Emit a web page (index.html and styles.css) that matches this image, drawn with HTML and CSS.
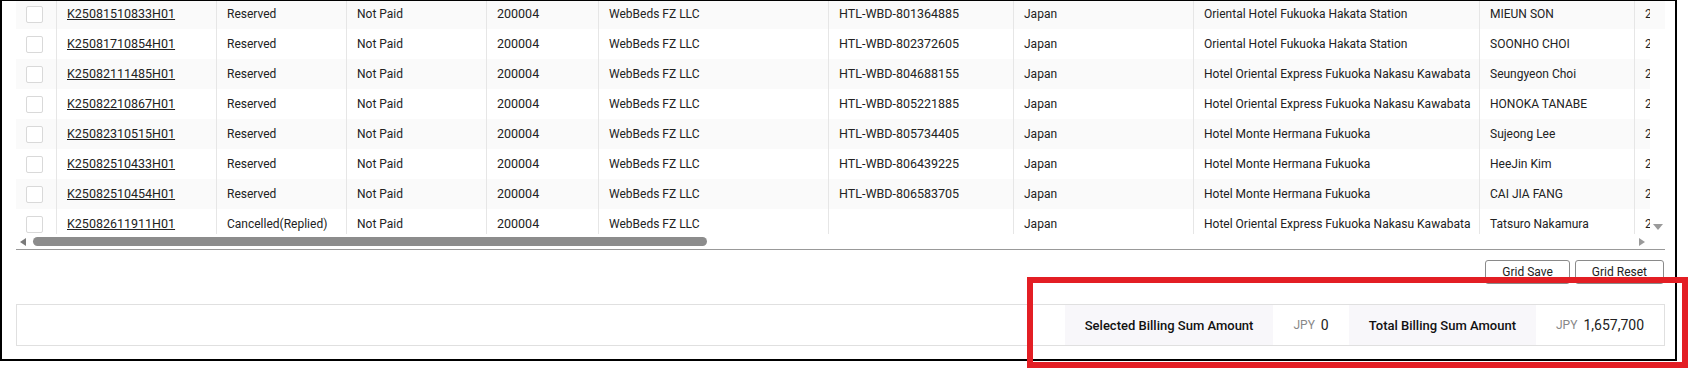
FILE: index.html
```html
<!DOCTYPE html>
<html lang="en">
<head>
  <meta charset="UTF-8">
  <title>Billing List</title>
  <link rel="stylesheet" href="styles.css">
</head>
<body>

  <div class="frame">
    <div class="grid">
      <div class="grid-body">
        <div class="viewport">
          <div class="rows">
            <div class="row">
              <div class="cell chk"><span class="box"></span></div>
              <div class="cell"><a href="#">K25081510833H01</a></div>
              <div class="cell">Reserved</div>
              <div class="cell">Not Paid</div>
              <div class="cell num">200004</div>
              <div class="cell">WebBeds FZ LLC</div>
              <div class="cell num">HTL-WBD-801364885</div>
              <div class="cell">Japan</div>
              <div class="cell">Oriental Hotel Fukuoka Hakata Station</div>
              <div class="cell">MIEUN SON</div>
              <div class="cell">2025-08-15</div>
            </div>
            <div class="row">
              <div class="cell chk"><span class="box"></span></div>
              <div class="cell"><a href="#">K25081710854H01</a></div>
              <div class="cell">Reserved</div>
              <div class="cell">Not Paid</div>
              <div class="cell num">200004</div>
              <div class="cell">WebBeds FZ LLC</div>
              <div class="cell num">HTL-WBD-802372605</div>
              <div class="cell">Japan</div>
              <div class="cell">Oriental Hotel Fukuoka Hakata Station</div>
              <div class="cell">SOONHO CHOI</div>
              <div class="cell">2025-08-17</div>
            </div>
            <div class="row">
              <div class="cell chk"><span class="box"></span></div>
              <div class="cell"><a href="#">K25082111485H01</a></div>
              <div class="cell">Reserved</div>
              <div class="cell">Not Paid</div>
              <div class="cell num">200004</div>
              <div class="cell">WebBeds FZ LLC</div>
              <div class="cell num">HTL-WBD-804688155</div>
              <div class="cell">Japan</div>
              <div class="cell">Hotel Oriental Express Fukuoka Nakasu Kawabata</div>
              <div class="cell">Seungyeon Choi</div>
              <div class="cell">2025-08-21</div>
            </div>
            <div class="row">
              <div class="cell chk"><span class="box"></span></div>
              <div class="cell"><a href="#">K25082210867H01</a></div>
              <div class="cell">Reserved</div>
              <div class="cell">Not Paid</div>
              <div class="cell num">200004</div>
              <div class="cell">WebBeds FZ LLC</div>
              <div class="cell num">HTL-WBD-805221885</div>
              <div class="cell">Japan</div>
              <div class="cell">Hotel Oriental Express Fukuoka Nakasu Kawabata</div>
              <div class="cell">HONOKA TANABE</div>
              <div class="cell">2025-08-22</div>
            </div>
            <div class="row">
              <div class="cell chk"><span class="box"></span></div>
              <div class="cell"><a href="#">K25082310515H01</a></div>
              <div class="cell">Reserved</div>
              <div class="cell">Not Paid</div>
              <div class="cell num">200004</div>
              <div class="cell">WebBeds FZ LLC</div>
              <div class="cell num">HTL-WBD-805734405</div>
              <div class="cell">Japan</div>
              <div class="cell">Hotel Monte Hermana Fukuoka</div>
              <div class="cell">Sujeong Lee</div>
              <div class="cell">2025-08-23</div>
            </div>
            <div class="row">
              <div class="cell chk"><span class="box"></span></div>
              <div class="cell"><a href="#">K25082510433H01</a></div>
              <div class="cell">Reserved</div>
              <div class="cell">Not Paid</div>
              <div class="cell num">200004</div>
              <div class="cell">WebBeds FZ LLC</div>
              <div class="cell num">HTL-WBD-806439225</div>
              <div class="cell">Japan</div>
              <div class="cell">Hotel Monte Hermana Fukuoka</div>
              <div class="cell">HeeJin Kim</div>
              <div class="cell">2025-08-25</div>
            </div>
            <div class="row">
              <div class="cell chk"><span class="box"></span></div>
              <div class="cell"><a href="#">K25082510454H01</a></div>
              <div class="cell">Reserved</div>
              <div class="cell">Not Paid</div>
              <div class="cell num">200004</div>
              <div class="cell">WebBeds FZ LLC</div>
              <div class="cell num">HTL-WBD-806583705</div>
              <div class="cell">Japan</div>
              <div class="cell">Hotel Monte Hermana Fukuoka</div>
              <div class="cell">CAI JIA FANG</div>
              <div class="cell">2025-08-25</div>
            </div>
            <div class="row">
              <div class="cell chk"><span class="box"></span></div>
              <div class="cell"><a href="#">K25082611911H01</a></div>
              <div class="cell">Cancelled(Replied)</div>
              <div class="cell">Not Paid</div>
              <div class="cell num">200004</div>
              <div class="cell">WebBeds FZ LLC</div>
              <div class="cell num"></div>
              <div class="cell">Japan</div>
              <div class="cell">Hotel Oriental Express Fukuoka Nakasu Kawabata</div>
              <div class="cell">Tatsuro Nakamura</div>
              <div class="cell">2025-08-26</div>
            </div>
          </div>
        </div>
        <div class="vscroll">
          <span class="vthumb"></span>
          <span class="arrow-down"></span>
        </div>
      </div>
      <div class="hscroll">
        <span class="arrow-left"></span>
        <span class="hthumb"></span>
        <span class="arrow-right"></span>
        <span class="corner"></span>
      </div>
    </div>

    <div class="actions">
      <button>Grid Save</button>
      <button>Grid Reset</button>
    </div>

    <div class="summary">
      <div class="sum-label">Selected Billing Sum Amount</div>
      <div class="sum-value"><span class="cur">JPY</span>0</div>
      <div class="sum-label">Total Billing Sum Amount</div>
      <div class="sum-value"><span class="cur">JPY</span>1,657,700</div>
    </div>
  </div>

  <div class="highlight"></div>

</body>
</html>
```

FILE: styles.css
```css
body {
  margin: 0;
  font-family: Roboto, 'Noto Sans', sans-serif;
  font-size: 12px;
  color: #222;
  background: #fff;
}
.frame {
  width: 1677px;
  height: 361px;
  box-sizing: border-box;
  border: 2px solid #000;
  border-top-width: 1px;
  padding: 0 10px 0 14px;
}
.grid {
  border-bottom: 1px solid #999;
}
.grid-body {
  display: flex;
  height: 233px;
}
.viewport {
  flex: 1;
  overflow: hidden;
}
.rows {
  margin-top: -2px;
}
.row {
  display: grid;
  grid-template-columns: 41px 160px 130px 140px 112px 230px 185px 180px 286px 155px 120px;
  height: 30px;
  background: #fff;
}
.row:nth-child(odd) {
  background: #fafafa;
}
.cell {
  border-right: 1px solid #e6e6e6;
  padding-left: 10px;
  line-height: 30px;
  white-space: nowrap;
  overflow: hidden;
}
.cell a {
  font-size: 12.5px;
  color: #222;
  text-decoration: underline;
}
.num {
  font-size: 12.5px;
}
.chk {
  display: flex;
  align-items: center;
  padding-left: 10px;
}
.box {
  width: 15px;
  height: 15px;
  border: 1px solid #d9d9d9;
  border-radius: 2px;
  background: #fff;
}
.vscroll {
  width: 15px;
  display: flex;
  flex-direction: column;
  justify-content: space-between;
  align-items: center;
}
.vthumb {
  width: 15px;
  height: 28px;
  background: #fafafa;
}
.arrow-down {
  width: 0;
  height: 0;
  border-left: 5px solid transparent;
  border-right: 5px solid transparent;
  border-top: 6px solid #9a9a9a;
  margin-bottom: 4px;
}
.hscroll {
  display: flex;
  align-items: center;
  height: 15px;
}
.arrow-left {
  width: 0;
  height: 0;
  border-top: 4px solid transparent;
  border-bottom: 4px solid transparent;
  border-right: 6px solid #7a7a7a;
  margin-left: 4px;
}
.hthumb {
  width: 674px;
  height: 9px;
  margin-left: 7px;
  border-radius: 5px;
  background: #8c8c8c;
}
.arrow-right {
  width: 0;
  height: 0;
  border-top: 4px solid transparent;
  border-bottom: 4px solid transparent;
  border-left: 6px solid #9a9a9a;
  margin-left: auto;
  margin-right: 5px;
}
.corner {
  width: 15px;
}
.actions {
  display: flex;
  justify-content: flex-end;
  gap: 5px;
  margin-top: 10px;
  padding-right: 1px;
}
button {
  height: 24px;
  padding: 0 16px;
  font-family: inherit;
  font-size: 12px;
  color: #222;
  background: #fff;
  border: 1px solid #8a8a8a;
  border-radius: 3px;
}
.summary {
  display: flex;
  justify-content: flex-end;
  height: 42px;
  box-sizing: border-box;
  margin-top: 20px;
  border: 1px solid #e0e0e0;
}
.sum-label,
.sum-value {
  display: flex;
  align-items: center;
  padding: 0 20px;
}
.sum-label {
  background: #f8f7fa;
  font-size: 13px;
  font-weight: 500;
  color: #111;
}
.sum-value {
  font-size: 14px;
}
.cur {
  font-size: 12px;
  color: #888;
  margin-right: 6px;
}
.highlight {
  position: absolute;
  left: 1027px;
  top: 277px;
  width: 661px;
  height: 91px;
  box-sizing: border-box;
  border: 6px solid #e31e24;
  pointer-events: none;
}
```
